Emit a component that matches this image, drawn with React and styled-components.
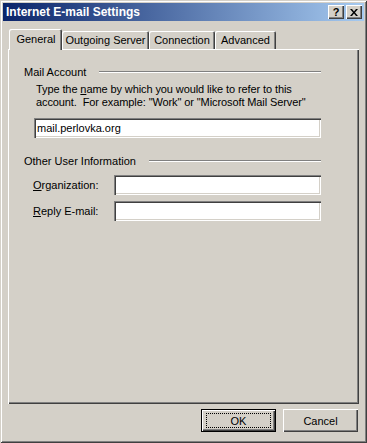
import React from 'react';
import styled, { createGlobalStyle } from 'styled-components';

const Global = createGlobalStyle`
  html, body {
    margin: 0;
    padding: 0;
    background: #d4d0c8;
  }
  body {
    font-family: Tahoma, "Liberation Sans", Arial, sans-serif;
    font-size: 11px;
    color: #000;
  }
`;

const Window = styled.div`
  box-sizing: border-box;
  width: 367px;
  height: 443px;
  padding: 3px;
  background: #d4d0c8;
  display: flex;
  flex-direction: column;
  box-shadow: inset 1px 1px #d4d0c8, inset -1px -1px #404040,
    inset 2px 2px #ffffff, inset -2px -2px #808080;
`;

const TitleBar = styled.div`
  height: 18px;
  display: flex;
  align-items: center;
  padding: 0 2px 0 2px;
  background: linear-gradient(to right, #0a246a, #a6caf0);
`;

const Title = styled.span`
  flex: 1;
  color: #fff;
  font-weight: bold;
  font-size: 12px;
  padding-left: 1px;
  white-space: nowrap;
`;

const CaptionButton = styled.div`
  box-sizing: border-box;
  width: 16px;
  height: 14px;
  margin-left: ${(p) => (p.$gap ? '2px' : '0')};
  background: #d4d0c8;
  display: flex;
  align-items: center;
  justify-content: center;
  font-weight: bold;
  font-size: 11px;
  line-height: 1;
  box-shadow: inset 1px 1px #ffffff, inset -1px -1px #404040,
    inset -2px -2px #808080;
`;

const Body = styled.div`
  flex: 1;
  display: flex;
  flex-direction: column;
  padding: 8px 5px 8px 5px;
`;

const TabRow = styled.div`
  display: flex;
  align-items: flex-end;
  height: 20px;
  padding-left: 1px;
  position: relative;
  z-index: 1;
`;

const Tab = styled.div`
  box-sizing: border-box;
  width: ${(p) => p.$w}px;
  height: ${(p) => (p.$active ? '21px' : '18px')};
  margin-bottom: ${(p) => (p.$active ? '-1px' : '0')};
  margin-left: ${(p) => p.$ml || 0}px;
  padding-bottom: ${(p) => (p.$active ? '2px' : '0')};
  padding-left: ${(p) => (p.$active ? '1px' : '0')};
  display: flex;
  align-items: center;
  justify-content: center;
  background: #d4d0c8;
  border-top-left-radius: 2px;
  border-top-right-radius: 2px;
  box-shadow: inset 1px 1px #ffffff, inset -1px 0 #404040,
    inset -2px 0 #808080;
  white-space: nowrap;
`;

const Panel = styled.div`
  flex: 1;
  padding: 16px 38px 0 16px;
  box-shadow: inset 1px 1px #ffffff, inset -1px -1px #404040,
    inset -2px -2px #808080;
`;

const GroupHeader = styled.div`
  display: flex;
  align-items: center;
  height: 13px;
  margin-top: ${(p) => p.$top || 0}px;
`;

const GroupLine = styled.div`
  flex: 1;
  margin-left: ${(p) => p.$gap}px;
  border-top: 1px solid #808080;
  border-bottom: 1px solid #ffffff;
  height: 0;
`;

const Description = styled.p`
  margin: 5px 0 0 12px;
  line-height: 13px;
  letter-spacing: -0.1px;
`;

const TextBox = styled.div`
  box-sizing: border-box;
  height: 20px;
  flex: ${(p) => (p.$grow ? 1 : 'none')};
  margin: ${(p) => p.$margin || 0};
  background: #fff;
  display: flex;
  align-items: center;
  padding-left: 3px;
  box-shadow: inset 1px 1px #808080, inset 2px 2px #404040,
    inset -1px -1px #ffffff, inset -2px -2px #d4d0c8;
`;

const FieldRow = styled.div`
  display: flex;
  align-items: center;
  margin: ${(p) => p.$top}px 0 0 9px;
`;

const FieldLabel = styled.label`
  width: 81px;
`;

const Footer = styled.div`
  display: flex;
  justify-content: flex-end;
  gap: 7px;
  padding: 5px 1px 0 0;
`;

const Button = styled.div`
  box-sizing: border-box;
  width: 75px;
  height: 23px;
  display: flex;
  align-items: center;
  justify-content: center;
  background: #d4d0c8;
  box-shadow: ${(p) =>
    p.$default
      ? 'inset 0 0 0 1px #000, inset 2px 2px #fff, inset -2px -2px #404040, inset -3px -3px #808080'
      : 'inset 1px 1px #fff, inset -1px -1px #404040, inset -2px -2px #808080'};
`;

const Focus = styled.span`
  box-sizing: border-box;
  width: 65px;
  height: 15px;
  display: flex;
  align-items: center;
  justify-content: center;
  border: 1px dotted #000;
`;

const App = () => {
  return (
    <Window>
      <Global />
      <TitleBar>
        <Title>Internet E-mail Settings</Title>
        <CaptionButton>?</CaptionButton>
        <CaptionButton $gap>
          <svg width="8" height="7" viewBox="0 0 8 7">
            <path d="M0 0h2l2 2.5L6 0h2L5 3.5 8 7H6L4 4.5 2 7H0l3-3.5z" fill="#000" />
          </svg>
        </CaptionButton>
      </TitleBar>
      <Body>
        <TabRow>
          <Tab $active $w={53}>General</Tab>
          <Tab $w={87}>Outgoing Server</Tab>
          <Tab $w={66}>Connection</Tab>
          <Tab $w={61}>Advanced</Tab>
        </TabRow>
        <Panel>
          <GroupHeader>
            Mail Account
            <GroupLine $gap={13} />
          </GroupHeader>
          <Description>
            Type the <u>n</u>ame by which you would like to refer to this
            <br />
            account.&nbsp; For example: "Work" or "Microsoft Mail Server"
          </Description>
          <TextBox $margin="9px 0 0 10px">mail.perlovka.org</TextBox>
          <GroupHeader $top={16}>
            Other User Information
            <GroupLine $gap={13} />
          </GroupHeader>
          <FieldRow $top={8}>
            <FieldLabel>
              <u>O</u>rganization:
            </FieldLabel>
            <TextBox $grow />
          </FieldRow>
          <FieldRow $top={6}>
            <FieldLabel>
              <u>R</u>eply E-mail:
            </FieldLabel>
            <TextBox $grow />
          </FieldRow>
        </Panel>
        <Footer>
          <Button $default>
            <Focus>OK</Focus>
          </Button>
          <Button>Cancel</Button>
        </Footer>
      </Body>
    </Window>
  );
};

export default App;
